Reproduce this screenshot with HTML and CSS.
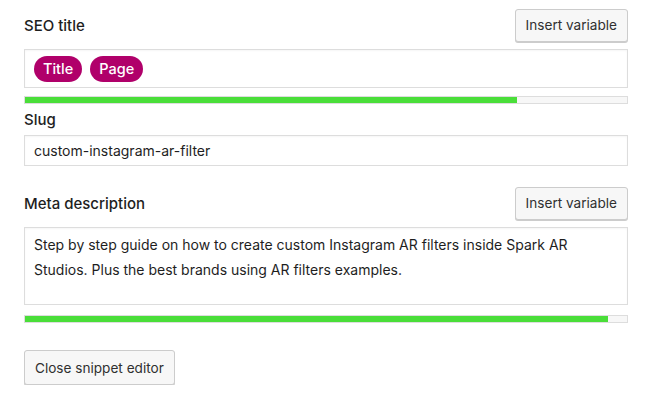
FILE: index.html
```html
<!DOCTYPE html>
<html>
<head>
<meta charset="utf-8">
<link rel="stylesheet" href="styles.css">
</head>
<body>
<div class="editor">
  <div class="field-head">
    <label class="label">SEO title</label>
    <button class="btn">Insert variable</button>
  </div>
  <div class="input title-input">
    <span class="pill">Title</span>
    <span class="pill">Page</span>
  </div>
  <div class="progress"><div class="fill" style="width:81.8%"></div></div>

  <div class="field-head slug-head">
    <label class="label">Slug</label>
  </div>
  <div class="input slug-input">custom-instagram-ar-filter</div>

  <div class="field-head meta-head">
    <label class="label">Meta description</label>
    <button class="btn">Insert variable</button>
  </div>
  <div class="input textarea">Step by step guide on how to create custom Instagram AR filters inside Spark AR Studios. Plus the best brands using AR filters examples.</div>
  <div class="progress meta-progress"><div class="fill" style="width:96.8%"></div></div>

  <button class="btn close-btn">Close snippet editor</button>
</div>
</body>
</html>
```

FILE: styles.css
```css
html, body {
  margin: 0;
  padding: 0;
  background: #fff;
}
body {
  font-family: Inter, "Noto Sans", "Liberation Sans", sans-serif;
  font-size: 14px;
  color: #1e1e1e;
}
.editor {
  padding: 8px 23px 0 24px;
  display: flex;
  flex-direction: column;
}
.field-head {
  display: flex;
  align-items: center;
  justify-content: space-between;
  height: 34px;
}
.label {
  font-weight: 500;
  font-size: 15px;
  color: #1e1e1e;
}
.btn {
  font-family: inherit;
  font-size: 13.6px;
  color: #303030;
  background: #f7f7f7;
  border: 1px solid #ccc;
  border-radius: 3px;
  box-shadow: 0 1px 0 #ccc;
  height: 33px;
  padding: 0 10px;
  cursor: pointer;
}
.input {
  border: 1px solid #ddd;
  box-shadow: inset 0 1px 2px rgba(0,0,0,0.04);
  background: #fff;
  box-sizing: border-box;
}
.title-input {
  margin-top: 7px;
  height: 39px;
  display: flex;
  align-items: center;
  gap: 8px;
  padding: 0 9px;
}
.pill {
  background: #b0006a;
  color: #fff;
  font-weight: 500;
  font-size: 14.5px;
  height: 26px;
  line-height: 26px;
  padding: 0 9px;
  border-radius: 13px;
}
.progress {
  margin-top: 8px;
  height: 8px;
  box-sizing: border-box;
  border: 1px solid #ddd;
  background: #f7f7f7;
}
.fill {
  height: 100%;
  background: #4ade39;
}
.slug-head {
  height: 20px;
  margin-top: 5px;
  margin-bottom: 6px;
}
.slug-input {
  height: 31px;
  line-height: 29px;
  padding: 0 9px;
  color: #1e1e1e;
}
.meta-head {
  margin-top: 20px;
}
.textarea {
  margin-top: 7px;
  height: 78px;
  padding: 4px 9px;
  line-height: 25px;
  color: #1e1e1e;
}
.meta-progress {
  margin-top: 10px;
}
.close-btn {
  align-self: flex-start;
  margin-top: 27px;
  height: 35px;
}
```
